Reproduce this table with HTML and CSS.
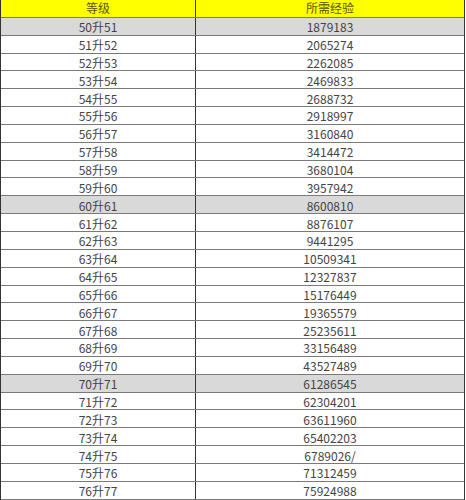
FILE: index.html
```html
<!DOCTYPE html>
<html lang="zh">
<head>
<meta charset="utf-8">
<link rel="stylesheet" href="styles.css">
</head>
<body>
<div class="table">
  <div class="row head"><div class="c1">等级</div><div class="c2">所需经验</div></div>
  <div class="row gray"><div class="c1">50升51</div><div class="c2">1879183</div></div>
  <div class="row"><div class="c1">51升52</div><div class="c2">2065274</div></div>
  <div class="row"><div class="c1">52升53</div><div class="c2">2262085</div></div>
  <div class="row"><div class="c1">53升54</div><div class="c2">2469833</div></div>
  <div class="row"><div class="c1">54升55</div><div class="c2">2688732</div></div>
  <div class="row"><div class="c1">55升56</div><div class="c2">2918997</div></div>
  <div class="row"><div class="c1">56升57</div><div class="c2">3160840</div></div>
  <div class="row"><div class="c1">57升58</div><div class="c2">3414472</div></div>
  <div class="row"><div class="c1">58升59</div><div class="c2">3680104</div></div>
  <div class="row"><div class="c1">59升60</div><div class="c2">3957942</div></div>
  <div class="row gray"><div class="c1">60升61</div><div class="c2">8600810</div></div>
  <div class="row"><div class="c1">61升62</div><div class="c2">8876107</div></div>
  <div class="row"><div class="c1">62升63</div><div class="c2">9441295</div></div>
  <div class="row"><div class="c1">63升64</div><div class="c2">10509341</div></div>
  <div class="row"><div class="c1">64升65</div><div class="c2">12327837</div></div>
  <div class="row"><div class="c1">65升66</div><div class="c2">15176449</div></div>
  <div class="row"><div class="c1">66升67</div><div class="c2">19365579</div></div>
  <div class="row"><div class="c1">67升68</div><div class="c2">25235611</div></div>
  <div class="row"><div class="c1">68升69</div><div class="c2">33156489</div></div>
  <div class="row"><div class="c1">69升70</div><div class="c2">43527489</div></div>
  <div class="row gray"><div class="c1">70升71</div><div class="c2">61286545</div></div>
  <div class="row"><div class="c1">71升72</div><div class="c2">62304201</div></div>
  <div class="row"><div class="c1">72升73</div><div class="c2">63611960</div></div>
  <div class="row"><div class="c1">73升74</div><div class="c2">65402203</div></div>
  <div class="row"><div class="c1">74升75</div><div class="c2">6789026/</div></div>
  <div class="row"><div class="c1">75升76</div><div class="c2">71312459</div></div>
  <div class="row"><div class="c1">76升77</div><div class="c2">75924988</div></div>
</div>
</body>
</html>
```
FILE: styles.css
```css
html, body {
  margin: 0;
  padding: 0;
  background: #ffffff;
}
body {
  font-family: "Noto Sans CJK SC", "Noto Sans", sans-serif;
  font-size: 12px;
  color: #444444;
  height: 500px;
  overflow: hidden;
}
.table {
  width: 465px;
  border-left: 1px solid #333;
  border-right: 1px solid #333;
  box-sizing: border-box;
}
.row {
  display: grid;
  grid-template-columns: 195px 1fr;
  height: 17.85px;
  box-sizing: border-box;
  border-bottom: 1px solid #7a7a7a;
}
.row > div {
  display: flex;
  align-items: center;
  justify-content: center;
  line-height: 1;
  padding-top: 2px;
}
.c1 {
  border-right: 1px solid #333;
}
.head {
  background: #ffff00;
  color: #5a5500;
}
.head > div {
  padding-top: 0;
}
.gray {
  background: #d9d9d9;
}
```
